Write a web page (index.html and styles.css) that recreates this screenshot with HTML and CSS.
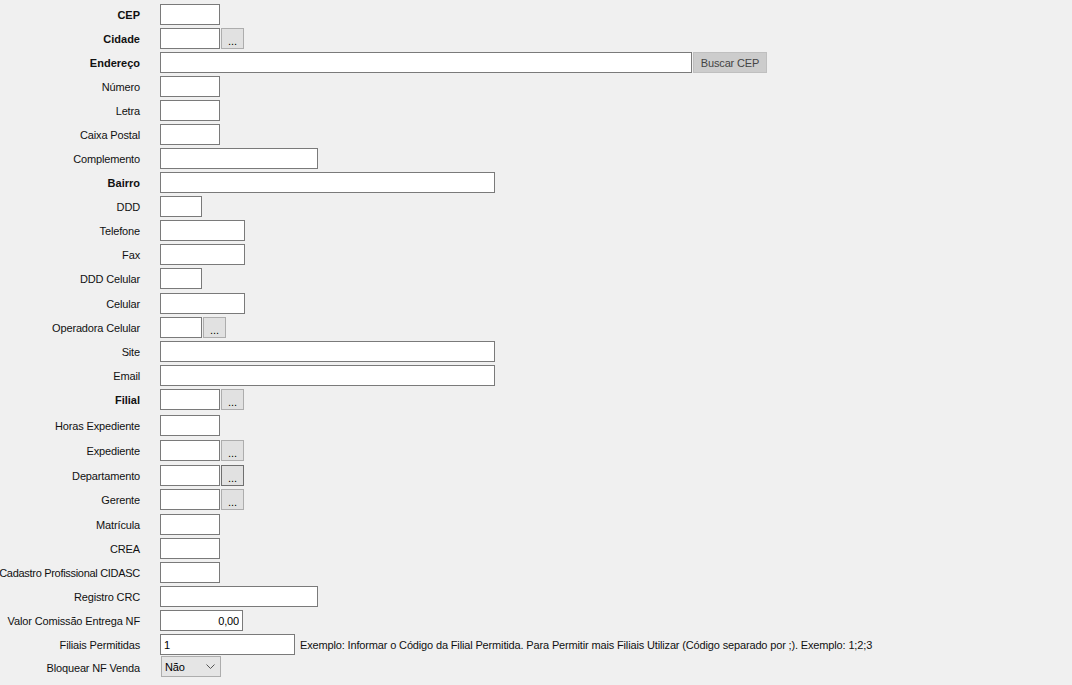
FILE: index.html
```html
<!DOCTYPE html>
<html lang="pt-BR">
<head>
    <meta charset="UTF-8">
    <title>Cadastro - Endereço</title>
    <link rel="stylesheet" href="styles.css">
</head>
<body>
    <div class="form">
        <div class="row"><div class="lbl bold">CEP</div><div class="field"><input class="in w60"></div></div>
        <div class="row"><div class="lbl bold">Cidade</div><div class="field"><input class="in w60"><button class="dots">...</button></div></div>
        <div class="row"><div class="lbl bold">Endereço</div><div class="field"><input class="in w532"><button class="btn-cep">Buscar CEP</button></div></div>
        <div class="row"><div class="lbl">Número</div><div class="field"><input class="in w60"></div></div>
        <div class="row"><div class="lbl">Letra</div><div class="field"><input class="in w60"></div></div>
        <div class="row"><div class="lbl">Caixa Postal</div><div class="field"><input class="in w60"></div></div>
        <div class="row"><div class="lbl">Complemento</div><div class="field"><input class="in w158"></div></div>
        <div class="row"><div class="lbl bold">Bairro</div><div class="field"><input class="in w335"></div></div>
        <div class="row"><div class="lbl">DDD</div><div class="field"><input class="in w42"></div></div>
        <div class="row"><div class="lbl">Telefone</div><div class="field"><input class="in w85"></div></div>
        <div class="row"><div class="lbl">Fax</div><div class="field"><input class="in w85"></div></div>
        <div class="row h25"><div class="lbl">DDD Celular</div><div class="field"><input class="in w42"></div></div>
        <div class="row"><div class="lbl">Celular</div><div class="field"><input class="in w85"></div></div>
        <div class="row"><div class="lbl">Operadora Celular</div><div class="field"><input class="in w42"><button class="dots">...</button></div></div>
        <div class="row"><div class="lbl">Site</div><div class="field"><input class="in w335"></div></div>
        <div class="row"><div class="lbl">Email</div><div class="field"><input class="in w335"></div></div>
        <div class="row h26"><div class="lbl bold">Filial</div><div class="field"><input class="in w60"><button class="dots">...</button></div></div>
        <div class="row h25"><div class="lbl">Horas Expediente</div><div class="field"><input class="in w60"></div></div>
        <div class="row h25"><div class="lbl">Expediente</div><div class="field"><input class="in w60"><button class="dots">...</button></div></div>
        <div class="row"><div class="lbl">Departamento</div><div class="field"><input class="in w60"><button class="dots focus">...</button></div></div>
        <div class="row h25"><div class="lbl">Gerente</div><div class="field"><input class="in w60"><button class="dots">...</button></div></div>
        <div class="row"><div class="lbl">Matrícula</div><div class="field"><input class="in w60"></div></div>
        <div class="row"><div class="lbl">CREA</div><div class="field"><input class="in w60"></div></div>
        <div class="row"><div class="lbl tight">Cadastro Profissional CIDASC</div><div class="field"><input class="in w60"></div></div>
        <div class="row"><div class="lbl">Registro CRC</div><div class="field"><input class="in w158"></div></div>
        <div class="row"><div class="lbl">Valor Comissão Entrega NF</div><div class="field"><input class="in w83 num" value="0,00"></div></div>
        <div class="row h22"><div class="lbl">Filiais Permitidas</div><div class="field"><input class="in w135" value="1"><span class="hint">Exemplo: Informar o Código da Filial Permitida. Para Permitir mais Filiais Utilizar (Código separado por ;). Exemplo: 1;2;3</span></div></div>
        <div class="row"><div class="lbl low">Bloquear NF Venda</div><div class="field">
            <div class="combo">
                <span>Não</span>
                <svg width="9" height="5" viewBox="0 0 9 5"><path d="M0.5 0.5 L4.5 4.5 L8.5 0.5" fill="none" stroke="#555" stroke-width="1"/></svg>
            </div>
        </div></div>
    </div>
</body>
</html>
```

FILE: styles.css
```css
html, body {
    margin: 0;
    padding: 0;
    background-color: #f0f0f0;
    font-family: 'Liberation Sans', Arial, sans-serif;
    font-size: 11px;
    letter-spacing: -0.15px;
    color: #111;
    overflow: hidden;
}
.form {
    padding-top: 4px;
}
.row {
    display: flex;
    align-items: flex-start;
    height: 24px;
}
.row.h22 { height: 22px; }
.row.h25 { height: 25px; }
.row.h26 { height: 26px; }
.lbl {
    width: 140px;
    flex: none;
    display: flex;
    justify-content: flex-end;
    white-space: nowrap;
    height: 21px;
    line-height: 23px;
    margin-right: 20px;
}
.lbl.bold {
    font-weight: bold;
    letter-spacing: 0;
}
.lbl.tight {
    letter-spacing: -0.3px;
}
.lbl.low {
    line-height: 24px;
}
.field {
    display: flex;
    align-items: center;
    gap: 1px;
}
.in {
    box-sizing: border-box;
    height: 21px;
    border: 1px solid #7a7a7a;
    background: #fff;
    margin: 0;
    padding: 0 3px;
    font-family: inherit;
    font-size: 11px;
    letter-spacing: inherit;
    color: #000;
    outline: none;
}
.in.num { text-align: right; }
.w42 { width: 42px; }
.w60 { width: 60px; }
.w83 { width: 83px; }
.w85 { width: 85px; }
.w135 { width: 135px; }
.w158 { width: 158px; }
.w335 { width: 335px; }
.w532 { width: 532px; }
.dots {
    box-sizing: border-box;
    width: 23px;
    height: 21px;
    margin: 0;
    padding: 4px 0 0;
    border: 1px solid #adadad;
    background: #e1e1e1;
    font-family: inherit;
    font-size: 11px;
    color: #000;
    line-height: 14px;
}
.dots.focus {
    border-color: #6f6f6f;
}
.btn-cep {
    box-sizing: border-box;
    width: 74px;
    height: 21px;
    margin: 0;
    padding: 0;
    border: 1px solid #bfbfbf;
    background: #cccccc;
    font-family: inherit;
    font-size: 11px;
    letter-spacing: inherit;
    color: #444;
}
.hint {
    margin-left: 4px;
    white-space: nowrap;
}
.combo {
    box-sizing: border-box;
    margin-left: 1px;
    width: 60px;
    height: 21px;
    border: 1px solid #adadad;
    background: #e5e5e5;
    display: flex;
    align-items: center;
    justify-content: space-between;
    padding: 0 5px 0 3px;
    color: #000;
}
```
